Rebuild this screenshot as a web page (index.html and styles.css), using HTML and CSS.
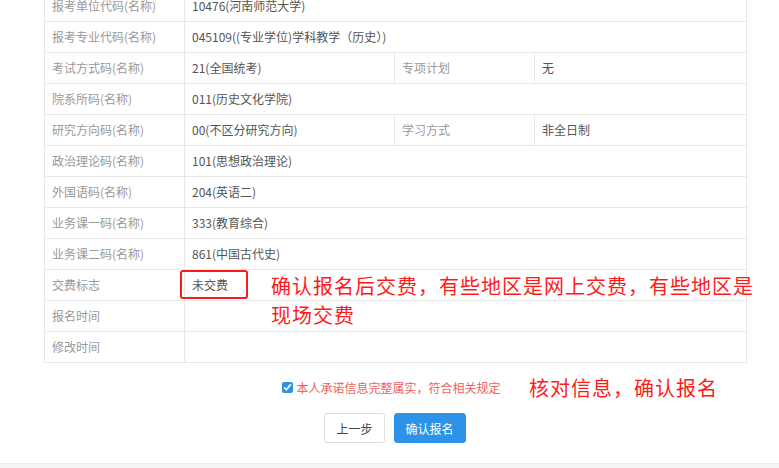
FILE: index.html
```html
<!DOCTYPE html>
<html lang="zh-CN">
<head>
    <meta charset="UTF-8">
    <meta name="viewport" content="width=device-width, initial-scale=1.0">
    <title>确认报名信息</title>
    <link rel="stylesheet" href="styles.css">
</head>
<body>
    <div class="page">
        <div class="container">
            <table class="info-table">
                <colgroup>
                    <col class="col-label">
                    <col class="col-value">
                    <col class="col-label">
                    <col class="col-value2">
                </colgroup>
                <tr>
                    <td class="label">报考单位代码(名称)</td>
                    <td class="value" colspan="3">10476(河南师范大学)</td>
                </tr>
                <tr>
                    <td class="label">报考专业代码(名称)</td>
                    <td class="value" colspan="3">045109((专业学位)学科教学（历史）)</td>
                </tr>
                <tr>
                    <td class="label">考试方式码(名称)</td>
                    <td class="value">21(全国统考)</td>
                    <td class="label">专项计划</td>
                    <td class="value">无</td>
                </tr>
                <tr>
                    <td class="label">院系所码(名称)</td>
                    <td class="value" colspan="3">011(历史文化学院)</td>
                </tr>
                <tr>
                    <td class="label">研究方向码(名称)</td>
                    <td class="value">00(不区分研究方向)</td>
                    <td class="label">学习方式</td>
                    <td class="value">非全日制</td>
                </tr>
                <tr>
                    <td class="label">政治理论码(名称)</td>
                    <td class="value" colspan="3">101(思想政治理论)</td>
                </tr>
                <tr>
                    <td class="label">外国语码(名称)</td>
                    <td class="value" colspan="3">204(英语二)</td>
                </tr>
                <tr>
                    <td class="label">业务课一码(名称)</td>
                    <td class="value" colspan="3">333(教育综合)</td>
                </tr>
                <tr>
                    <td class="label">业务课二码(名称)</td>
                    <td class="value" colspan="3">861(中国古代史)</td>
                </tr>
                <tr>
                    <td class="label">交费标志</td>
                    <td class="value fee-cell" colspan="3">
                        未交费
                        <span class="mark-box"></span>
                        <span class="note note-fee">确认报名后交费，有些地区是网上交费，有些地区是<br>现场交费</span>
                    </td>
                </tr>
                <tr>
                    <td class="label">报名时间</td>
                    <td class="value" colspan="3"></td>
                </tr>
                <tr>
                    <td class="label">修改时间</td>
                    <td class="value" colspan="3"></td>
                </tr>
            </table>

            <div class="confirm-area">
                <label class="promise">
                    <input type="checkbox" checked>
                    <span>本人承诺信息完整属实，符合相关规定</span>
                </label>
                <span class="note note-confirm">核对信息，确认报名</span>
                <div class="actions">
                    <button class="btn">上一步</button>
                    <button class="btn primary">确认报名</button>
                </div>
            </div>
        </div>
    </div>
    <div class="footer"></div>
</body>
</html>
```

FILE: styles.css
```css
* {
    margin: 0;
    padding: 0;
    box-sizing: border-box;
}

body {
    font-family: "Noto Sans CJK SC", "Noto Sans", sans-serif;
    font-size: 12px;
    background-color: #fff;
    color: #555;
    height: 468px;
    overflow: hidden;
}

.page {
    height: 463px;
    overflow: hidden;
}

.container {
    width: 702px;
    margin-left: 44px;
    margin-top: -10px;
}

.info-table {
    width: 702px;
    border-collapse: collapse;
    table-layout: fixed;
}

.col-label {
    width: 140px;
}

.col-value {
    width: 210px;
}

.col-value2 {
    width: 212px;
}

.info-table td {
    height: 31px;
    border: 1px solid #e8e8e8;
    padding: 0 7px;
    line-height: 16px;
    white-space: nowrap;
}

.label {
    color: #999;
}

.value {
    color: #555;
}

.fee-cell {
    position: relative;
}

.mark-box {
    position: absolute;
    left: -5px;
    top: 0px;
    width: 68px;
    height: 29px;
    border: 2px solid #ff1a1a;
    border-radius: 3px;
}

.note {
    position: absolute;
    color: #ff1a1a;
    font-size: 20px;
    line-height: 29px;
    letter-spacing: 1px;
    white-space: nowrap;
}

.note-fee {
    left: 86px;
    top: 1px;
}

.confirm-area {
    position: relative;
    display: flex;
    flex-direction: column;
    align-items: center;
    padding-top: 16px;
}

.promise {
    display: flex;
    align-items: center;
    gap: 3px;
    color: #f06060;
    margin-left: -7px;
}

.promise input {
    width: 11px;
    height: 11px;
    accent-color: #2d8fe8;
    margin: 0;
}

.note-confirm {
    left: 485px;
    top: 10px;
}

.actions {
    display: flex;
    gap: 9px;
    margin-top: 17px;
}

.btn {
    font-family: inherit;
    font-size: 12px;
    height: 30px;
    padding: 0 11px;
    border: 1px solid #ddd;
    border-radius: 3px;
    background-color: #fff;
    color: #444;
}

.btn.primary {
    background-color: #2d93e8;
    border-color: #2d93e8;
    color: #fff;
}

.footer {
    height: 5px;
    background-color: #f4f4f4;
    border-top: 1px solid #ececec;
}
```
